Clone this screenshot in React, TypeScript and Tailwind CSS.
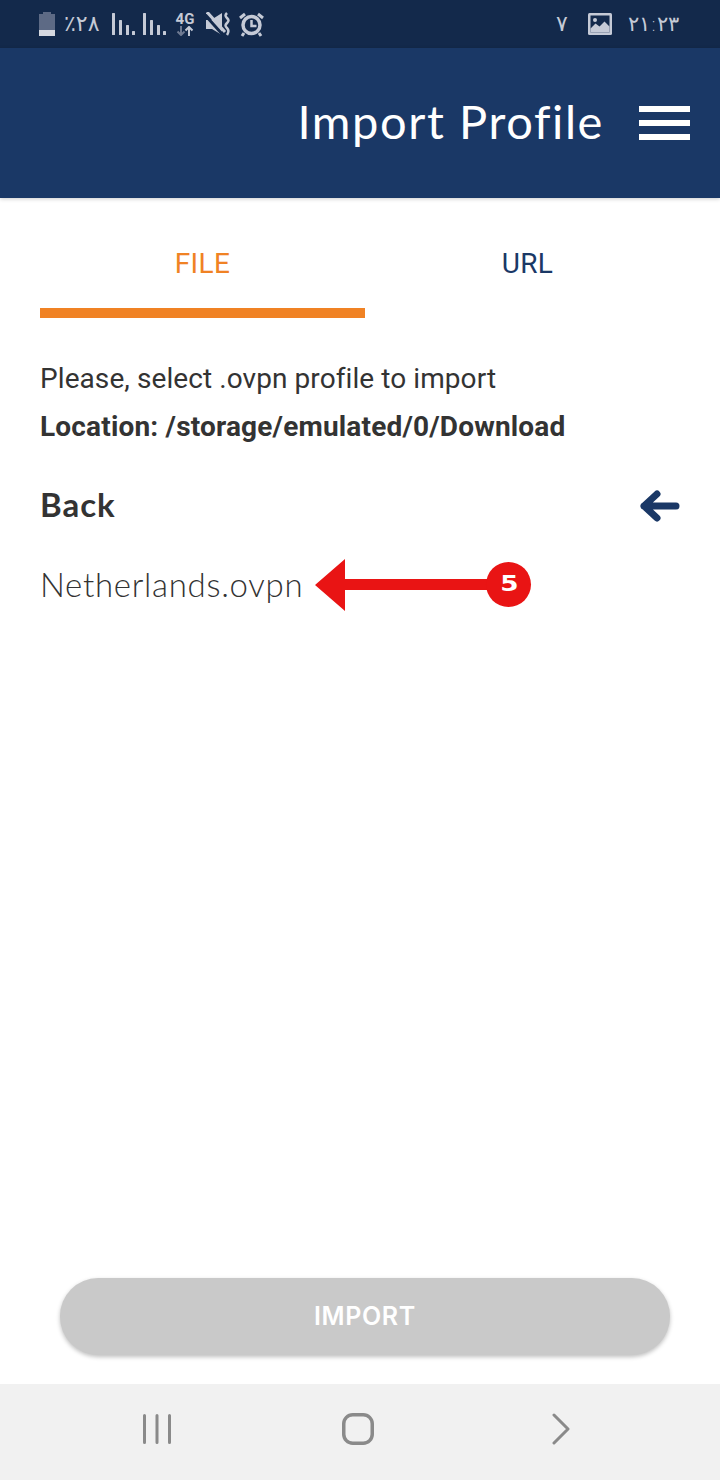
const Signal = () => (
  <svg width="23" height="24" viewBox="0 0 23 24" fill="#c5cad6">
    <rect x="0" y="1" width="3" height="22" rx="0.5" />
    <rect x="7" y="8" width="3" height="15" rx="0.5" />
    <rect x="14" y="13" width="3" height="10" rx="0.5" />
    <rect x="20" y="19" width="3" height="4" rx="0.5" />
  </svg>
)

const StatusBar = () => (
  <div className="h-12 bg-[#13294b] flex items-center justify-between pl-[39px] pr-[38px] text-[#c5cad6] font-['DejaVu_Sans',sans-serif]">
    <div className="flex items-center">
      <svg width="16" height="24" viewBox="0 0 16 24">
        <rect x="4" y="0" width="8" height="3" fill="#5d6a85" />
        <rect x="0" y="2" width="16" height="16" fill="#5d6a85" />
        <rect x="0" y="18" width="16" height="6" fill="#d5d8e0" />
      </svg>
      <span className="ml-[9px] w-[37px] text-[22px] leading-none">٪۲۸</span>
      <div className="ml-[11px] flex gap-2">
        <Signal />
        <Signal />
      </div>
      <div className="ml-[10px] w-[18px] flex flex-col items-center">
        <span className="text-[15px] leading-[14px] font-bold font-['Roboto',sans-serif]">4G</span>
        <svg width="18" height="10" viewBox="0 0 18 10" fill="none" strokeWidth="2">
          <path d="M5 0v9M1.500 5.500L5 9l3.500-3.500" stroke="#6f7a92" />
          <path d="M13 10V1M9.500 4.500L13 1l3.500 3.500" stroke="#c5cad6" />
        </svg>
      </div>
      <svg className="ml-3" width="25" height="24" viewBox="0 0 25 24" fill="none">
        <path d="M0 8h5L16 1v22L6 17H0z" fill="#c5cad6" />
        <path d="M-1 3l18 20" stroke="#13294b" strokeWidth="3" />
        <path d="M1 0l18 20" stroke="#c5cad6" strokeWidth="3" />
        <path d="M21 1c-2 2-2 3 0 5 2 2 2 3 0 5-2 2-2 3 0 5 2 2 2 4 0 7" stroke="#c5cad6" strokeWidth="2.500" />
      </svg>
      <svg className="ml-2" width="25" height="25" viewBox="0 0 25 25" fill="none" stroke="#c5cad6">
        <circle cx="12.500" cy="13" r="8.500" strokeWidth="3.500" />
        <path d="M12.500 8v6h5" strokeWidth="2.500" />
        <path d="M1 6l5-4M24 6l-5-4" strokeWidth="3" />
        <path d="M5 21l-2 3M20 21l2 3" strokeWidth="3" />
      </svg>
    </div>
    <div className="flex items-center">
      <span className="text-[22px] leading-none font-light">۷</span>
      <svg className="ml-5" width="24" height="22" viewBox="0 0 24 22">
        <rect width="24" height="22" rx="1.500" fill="#c5cad6" />
        <rect x="2.500" y="2.500" width="19" height="17" fill="#13294b" />
        <circle cx="7" cy="7" r="2" fill="#c5cad6" />
        <path d="M2.500 19.500v-4l5-5 4 3 5-5 5 5v6z" fill="#c5cad6" />
      </svg>
      <span className="ml-4 w-[54px] text-[21px] leading-none font-light whitespace-nowrap">۲۱:۲۳</span>
    </div>
  </div>
)

const Header = () => (
  <div className="h-[150px] bg-[#1a3866] flex items-center justify-end pr-[30px] shadow-[0_1px_4px_rgba(0,0,0,0.2)]">
    <h1 className="text-[47px] leading-none tracking-[1.6px] text-white font-['Lato',sans-serif] mr-[35px] mb-1">Import Profile</h1>
    <div className="flex flex-col gap-2 w-[51px]">
      <div className="h-[6px] bg-white" />
      <div className="h-[6px] bg-white" />
      <div className="h-[6px] bg-white" />
    </div>
  </div>
)

const Tabs = () => (
  <div className="flex pl-10 font-['Roboto',sans-serif] text-[28px] tracking-[0.4px]">
    <div className="w-[325px] h-[120px] flex flex-col border-b-[10px] border-[#f08224]">
      <span className="mt-[50px] leading-[32px] text-center text-[#f08224]">FILE</span>
    </div>
    <div className="w-[325px] h-[120px] flex flex-col">
      <span className="mt-[50px] leading-[32px] text-center text-[#1a3866]">URL</span>
    </div>
  </div>
)

const RedArrow = () => (
  <div className="relative ml-3 mt-[2px] w-[216px] h-[52px]">
    <svg className="absolute inset-0" width="216" height="52" viewBox="0 0 216 52" fill="#e91414">
      <path d="M0 26L30 0v20h150v11H30v21z" />
    </svg>
    <div className="absolute left-[171px] top-[3px] w-[45px] h-[45px] rounded-full bg-[#e91414] flex items-center justify-center text-white font-['DejaVu_Sans',sans-serif] font-bold text-[21px] leading-none">
      <span className="scale-x-125">5</span>
    </div>
  </div>
)

const BottomNav = () => (
  <div className="h-24 bg-[#f1f1f1] flex items-center pb-[6px]">
    <svg className="ml-[143px]" width="28" height="30" viewBox="0 0 28 30" stroke="#8a8a8a" strokeWidth="3" strokeLinecap="round">
      <path d="M1.500 1.500v27M14 1.500v27M26.500 1.500v27" />
    </svg>
    <svg className="ml-[171px]" width="32" height="32" viewBox="0 0 32 32" fill="none" stroke="#8a8a8a" strokeWidth="3.500">
      <rect x="1.750" y="1.750" width="28.500" height="28.500" rx="9" />
    </svg>
    <svg className="ml-[178px]" width="18" height="32" viewBox="0 0 18 32" fill="none" stroke="#8a8a8a" strokeWidth="3" strokeLinecap="round" strokeLinejoin="round">
      <path d="M2 2l14 14L2 30" />
    </svg>
  </div>
)

export default function App() {
  return (
    <div className="w-[720px] h-[1480px] bg-white flex flex-col overflow-hidden">
      <StatusBar />
      <Header />
      <Tabs />
      <div className="flex-1 flex flex-col px-10 text-[#333333]">
        <p className="mt-[45px] text-[28px] leading-[32px] tracking-[0.08px] font-['Roboto',sans-serif]">Please, select .ovpn profile to import</p>
        <p className="mt-4 text-[28px] leading-[32px] tracking-[0.18px] font-bold font-['Roboto',sans-serif]">Location: /storage/emulated/0/Download</p>
        <div className="mt-[41px] flex items-center justify-between font-['Lato',sans-serif]">
          <span className="text-[33px] leading-[40px] font-bold tracking-[1px]">Back</span>
          <svg className="mt-1" width="40" height="32" viewBox="0 0 40 32" fill="none" stroke="#1a3866" strokeWidth="7" strokeLinecap="round" strokeLinejoin="round">
            <path d="M17 4L4 16l13 12M4 16h32" />
          </svg>
        </div>
        <div className="mt-[33px] flex items-center font-['Lato',sans-serif]">
          <span className="text-[33px] leading-[52px] font-light tracking-[0.7px] whitespace-nowrap">Netherlands.ovpn</span>
          <RedArrow />
        </div>
        <button className="mt-auto mb-[29px] ml-5 w-[610px] h-[77px] rounded-[38px] bg-[#c9c9c9] shadow-[0_2px_4px_rgba(0,0,0,0.25)] text-white text-[25px] font-semibold tracking-wide font-['Inter',sans-serif]">
          IMPORT
        </button>
      </div>
      <BottomNav />
    </div>
  )
}
